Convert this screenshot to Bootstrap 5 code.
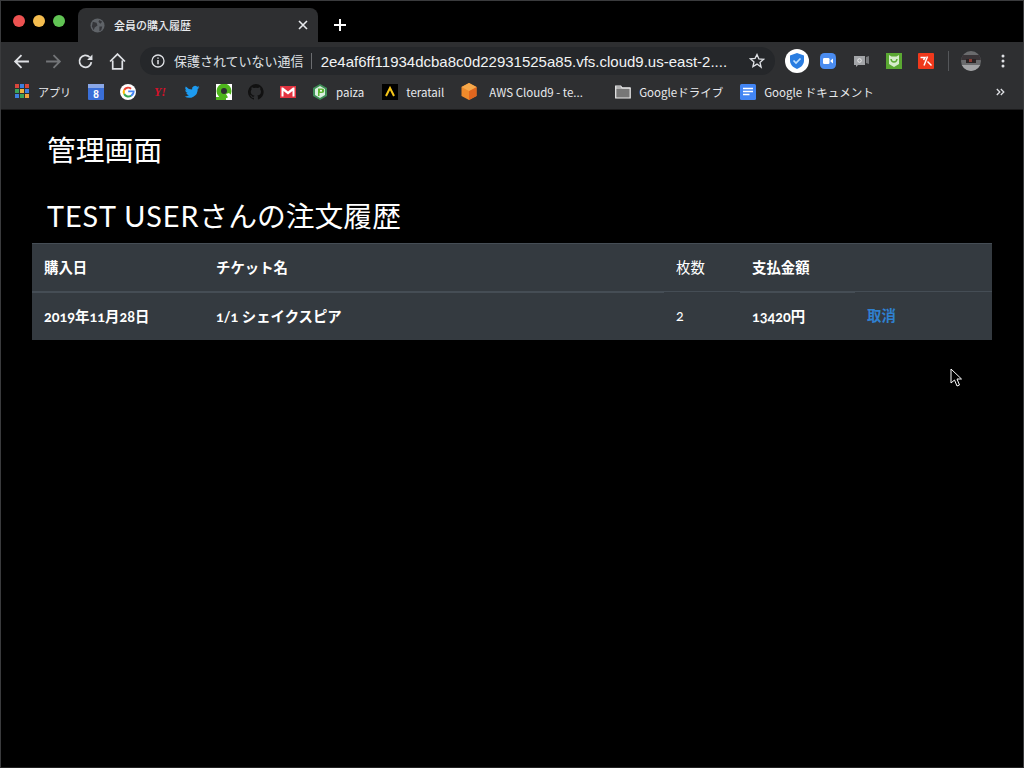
<!DOCTYPE html>
<html lang="ja">
<head>
<meta charset="utf-8">
<title>会員の購入履歴</title>
<link href="https://cdn.jsdelivr.net/npm/bootstrap@5.3.0/dist/css/bootstrap.min.css" rel="stylesheet">
<style>
html,body{height:100%;}
body{background:#000;color:#fff;font-family:"Lato","Noto Sans CJK JP",sans-serif;overflow:hidden;}
.shell{height:768px;border:1px solid #3a3b3d;border-bottom-color:#222;display:flex;flex-direction:column;position:relative;}
.tabstrip{height:41px;flex:none;background:#000;padding-left:12px;}
.light{width:12px;height:12px;border-radius:50%;margin-right:8px;margin-top:-1px;}
.tab-item{width:240px;height:34px;margin-left:5px;align-self:flex-end;background:#2e2f31;border-radius:8px 8px 0 0;padding:0 10px 0 12px;font:500 11px "Noto Sans CJK JP",sans-serif;color:#e8eaed;}
.tab-item span{flex:1;margin-left:9px;}
.plus{margin-left:16px;margin-top:6px;}
.toolbar{height:38px;flex:none;background:#2e2f31;padding-left:12px;}
.tool{margin-right:15px;flex:none;}
.omni{width:635px;height:28px;margin-left:-1px;margin-right:10px;border-radius:14px;background:#25272a;padding:0 10px 0 11px;font:400 13px "Noto Sans CJK JP",sans-serif;color:#dfe1e5;white-space:nowrap;}
.omni .warn{margin-left:9px;padding-right:7px;border-right:1px solid #6b6d70;line-height:16px;}
.omni .addr{margin-left:9px;flex:1;font:400 15px "Liberation Sans",sans-serif;color:#f1f3f4;}
.ext{margin-right:11px;flex:none;}
.bookmarks{height:30px;flex:none;background:#2e2f31;padding-left:14px;padding-bottom:6px;font:400 11.5px "Noto Sans CJK JP","Liberation Sans",sans-serif;color:#e8eaed;white-space:nowrap;border-bottom:1px solid #1b1b1c;}
.bm{flex:none;margin-right:16px;}
.bm-gap{margin-right:8px;}
.apps-label{font-size:11px;margin-right:17px;}
.page-area{flex:1;background:#000;padding:22px 31px 0;}
.ttl{font-family:"Lato","Noto Sans CJK JP",sans-serif;font-size:28.8px;font-weight:400;line-height:36px;margin:0 0 30px 15px;}
.ttl.second{margin-bottom:9px;}
.ttl-latin{letter-spacing:.9px;}
.orders{--bs-table-bg:#343a40;--bs-table-color:#fff;--bs-table-border-color:#454d55;width:960px;table-layout:fixed;margin:0;font-size:14.4px;background:#343a40;}
.orders th,.orders td{padding:1px 12px 0;vertical-align:middle;font-weight:700;border-bottom:0;box-shadow:none;background:#343a40;color:#fff;font-variant-numeric:oldstyle-nums;}
.orders thead th,.orders thead td{height:48px;border-top:1px solid #454d55;border-bottom:2px solid #454d55;}
.orders thead td{border-bottom-width:1px;}
.orders tbody td{height:48px;}
.orders .plain{font-weight:400;}
.orders a{color:#2f80d0;text-decoration:none;}
.cursor{position:absolute;left:949px;top:367px;}
</style>
</head>
<body>
<div class="shell">
  <div class="tabstrip d-flex align-items-center">
    <div class="light" style="background:#ed5251"></div>
    <div class="light" style="background:#f5bd4f"></div>
    <div class="light" style="background:#61c454"></div>
    <div class="tab-item d-flex align-items-center">
      <svg width="15" height="15" viewBox="0 0 16 16"><circle cx="8" cy="8" r="7.500" fill="#5f6368"/><path d="M3 4l4 1 1 3-3 2-1 3-2-4zM10 2l3 2-2 2-2-2zM10 9l3 0-1 4-2 1z" fill="#35363a"/></svg>
      <span>会員の購入履歴</span>
      <svg width="10" height="10" viewBox="0 0 10 10"><path d="M1 1l8 8M9 1l-8 8" stroke="#e8eaed" stroke-width="1.600"/></svg>
    </div>
    <svg class="plus" width="12" height="12" viewBox="0 0 12 12"><path d="M6 0v12M0 6h12" stroke="#fff" stroke-width="2"/></svg>
  </div>
  <div class="toolbar d-flex align-items-center">
    <svg class="tool" width="17" height="17" viewBox="0 0 16 16"><path d="M15 8H2M8 2L2 8l6 6" fill="none" stroke="#dfe1e5" stroke-width="1.700"/></svg>
    <svg class="tool" width="17" height="17" viewBox="0 0 16 16"><path d="M1 8h13M8 2l6 6-6 6" fill="none" stroke="#737578" stroke-width="1.700"/></svg>
    <svg class="tool" width="17" height="17" viewBox="0 0 16 16"><path d="M13.500 8.500A5.600 5.600 0 1 1 12 4" fill="none" stroke="#dfe1e5" stroke-width="1.700"/><path d="M14.500 1.500v5h-5z" fill="#dfe1e5"/></svg>
    <svg class="tool" width="17" height="17" viewBox="0 0 16 16"><path d="M1 8l7-7 7 7M3.500 7v8h9V7" fill="none" stroke="#dfe1e5" stroke-width="1.600"/></svg>
    <div class="omni d-flex align-items-center">
      <svg width="14" height="14" viewBox="0 0 14 14"><circle cx="7" cy="7" r="6" fill="none" stroke="#dfe1e5" stroke-width="1.300"/><path d="M7 6v4.200M7 3.400v1.400" stroke="#dfe1e5" stroke-width="1.500"/></svg>
      <span class="warn">保護されていない通信</span>
      <span class="addr">2e4af6ff11934dcba8c0d22931525a85.vfs.cloud9.us-east-2....</span>
      <svg width="16" height="16" viewBox="0 0 16 16"><path d="M8 1.500l1.900 4.400 4.700.4-3.600 3.100 1.100 4.700L8 11.100l-4.100 2.500L5 8.900 1.400 5.800l4.700-.4z" fill="none" stroke="#dfe1e5" stroke-width="1.300"/></svg>
    </div>
    <svg class="ext" width="24" height="24" viewBox="0 0 24 24"><circle cx="12" cy="12" r="12" fill="#fff"/><path d="M12 4l7 2.500v5c0 4-3 7-7 8.500-4-1.500-7-4.500-7-8.500v-5z" fill="#2a7de1"/><path d="M8.500 11.500l2.500 2.500 4.500-4.500" fill="none" stroke="#bfe0ff" stroke-width="1.700"/></svg>
    <svg class="ext" width="16" height="16" viewBox="0 0 16 16"><rect width="16" height="16" rx="4.500" fill="#4a8cf0"/><rect x="3" y="5" width="6.500" height="6" rx="1.200" fill="#fff"/><path d="M10.500 7.500l2.500-2v5l-2.500-2z" fill="#fff"/></svg>
    <svg class="ext" width="16" height="16" style="margin-left:6px;margin-right:17px" viewBox="0 0 16 16"><path d="M1 3h11v9H5l-2 2v-2H1z" fill="#a3a5a8"/><path d="M13 4l3-1v8l-3-1z" fill="#77797c"/><circle cx="6.500" cy="7.500" r="1.800" fill="none" stroke="#eee" stroke-width=".9"/></svg>
    <svg class="ext" width="16" height="16" style="margin-right:16px" viewBox="0 0 16 16"><rect width="16" height="16" fill="#5aa832"/><path d="M3 2l2.500 1.500h5L13 2v9l-5 3-5-3z" fill="#d6eccb"/><path d="M5 6c.5 4 5.500 4 6 0" fill="none" stroke="#5aa832" stroke-width="1.500"/></svg>
    <svg class="ext" width="16" height="16" style="margin-right:14px" viewBox="0 0 16 16"><rect width="16" height="16" rx="1" fill="#f0391c"/><path d="M2.500 4.500h4.500l-1.500 2.500M9.500 3.500L6 12.500M9.500 8.500l4 4" stroke="#fff" stroke-width="1.500" fill="none"/></svg>
    <div class="ext" style="width:1px;height:20px;background:#55575a;margin-right:12px"></div>
    <svg class="ext" width="20" height="20" style="margin-right:20px" viewBox="0 0 20 20"><defs><clipPath id="cp"><circle cx="10" cy="10" r="10"/></clipPath></defs><g clip-path="url(#cp)"><rect width="20" height="20" fill="#6a6b6d"/><rect y="4" width="20" height="5" fill="#3a3538"/><rect x="5" y="8" width="10" height="4" fill="#2a2324"/><rect x="8" y="8" width="3" height="3" fill="#8a3b33"/><rect y="14" width="20" height="6" fill="#a3a4a6"/></g></svg>
    <svg class="ext" width="4" height="14" viewBox="0 0 4 14"><circle cx="2" cy="2" r="1.500" fill="#dfe1e5"/><circle cx="2" cy="7" r="1.500" fill="#dfe1e5"/><circle cx="2" cy="12" r="1.500" fill="#dfe1e5"/></svg>
  </div>
  <div class="bookmarks d-flex align-items-center">
    <svg class="bm-gap flex-none" width="15" height="15" viewBox="0 0 15 15"><g><rect x="0" y="0" width="4" height="4" fill="#d8473c"/><rect x="5" y="0" width="4" height="4" fill="#3d7fe0"/><rect x="10" y="0" width="4" height="4" fill="#d8473c"/><rect x="0" y="5" width="4" height="4" fill="#3da35a"/><rect x="5" y="5" width="4" height="4" fill="#f2b33d"/><rect x="10" y="5" width="4" height="4" fill="#3d7fe0"/><rect x="0" y="10" width="4" height="4" fill="#3d7fe0"/><rect x="5" y="10" width="4" height="4" fill="#3da35a"/><rect x="10" y="10" width="4" height="4" fill="#f2a33d"/></g></svg>
    <span class="apps-label">アプリ</span>
    <svg class="bm" width="16" height="16" viewBox="0 0 16 16"><rect width="16" height="16" rx="1" fill="#3a6fd8"/><rect width="16" height="4" fill="#8aa7e6"/><text x="8" y="14" font-size="10" fill="#fff" text-anchor="middle" font-family="Liberation Sans" font-weight="700">8</text></svg>
    <svg class="bm" width="16" height="16" viewBox="0 0 16 16"><circle cx="8" cy="8" r="8" fill="#fff"/><path d="M12.800 8.300h-4.600v-1.800h6.400c.3 3.800-2.200 6.500-5.600 6.500" fill="#4285f4"/><path d="M3.400 5.300A5.400 5.400 0 0 1 11.700 4.100L10.400 5.400A3.500 3.500 0 0 0 5 6.700z" fill="#ea4335"/><path d="M3.400 5.300L5 6.700a3.500 3.500 0 0 0 0 2.600L3.400 10.700a5.400 5.400 0 0 1 0-5.400z" fill="#fbbc05"/><path d="M3.400 10.700L5 9.300a3.500 3.500 0 0 0 5.200 1.600L11.600 12.200A5.400 5.400 0 0 1 3.400 10.700z" fill="#34a853"/></svg>
    <svg class="bm" width="16" height="16" viewBox="0 0 16 16"><text x="8" y="12" font-size="12" fill="#d6112a" text-anchor="middle" font-family="Liberation Serif" font-weight="700" font-style="italic">Y!</text></svg>
    <svg class="bm" width="16" height="16" viewBox="0 0 16 16"><path d="M15.500 3.300c-.5.300-1.100.4-1.700.5.600-.4 1.100-1 1.300-1.700-.6.400-1.200.6-1.900.7a3 3 0 0 0-5.100 2.700A8.500 8.500 0 0 1 1.800 2.400 3 3 0 0 0 2.700 6.400c-.5 0-1-.1-1.400-.4 0 1.500 1 2.700 2.400 3-.4.100-.9.100-1.400 0 .4 1.200 1.500 2.100 2.800 2.100A6 6 0 0 1 .6 12.400a8.500 8.500 0 0 0 13.100-7.500c.7-.4 1.300-1 1.800-1.600z" fill="#1d9bf0"/></svg>
    <svg class="bm" width="16" height="16" viewBox="0 0 16 16"><rect width="16" height="16" fill="#fff"/><circle cx="8" cy="7" r="7.500" fill="#4eb51c"/><circle cx="8" cy="7" r="3" fill="#2e2f31"/><path d="M10 10l3 5h3v-3l-3-3z" fill="#fff"/><rect y="13" width="10" height="3" fill="#4eb51c"/></svg>
    <svg class="bm" width="16" height="16" viewBox="0 0 16 16"><path fill="#111" d="M8 0a8 8 0 0 0-2.500 15.600c.4.100.5-.2.500-.4v-1.400c-2.200.5-2.700-1-2.700-1-.4-.9-.9-1.200-.9-1.200-.7-.5.100-.5.100-.5.800.1 1.200.8 1.200.8.700 1.200 1.900.9 2.300.7.100-.5.300-.9.500-1.100-1.800-.2-3.700-.9-3.700-4 0-.9.300-1.600.8-2.100-.1-.2-.4-1 .1-2.100 0 0 .7-.2 2.200.8a7.600 7.600 0 0 1 4 0c1.500-1 2.200-.8 2.200-.8.400 1.100.2 1.900.1 2.100.5.600.8 1.300.8 2.100 0 3.100-1.900 3.700-3.700 3.900.3.300.6.800.6 1.500v2.200c0 .2.100.5.500.4A8 8 0 0 0 8 0z"/></svg>
    <svg class="bm" width="16" height="16" viewBox="0 0 16 16"><rect y="2" width="16" height="12" fill="#e2323f"/><path d="M1.500 3.500v9h2V7l4.500 3.500L12.500 7v5.500h2v-9H13L8 7.500 3 3.500z" fill="#fff"/></svg>
    <svg class="flex-none" style="margin-right:8px" width="16" height="16" viewBox="0 0 16 16"><path d="M8 0l7 4v8l-7 4-7-4V4z" fill="#3f8f57"/><path d="M8 2l5 3v6l-5 3-5-3V5z" fill="#d9efe0"/><path d="M6 4.500h4a2 2 0 0 1 0 4.500H7.500v3H6z" fill="#5cb531"/><circle cx="9" cy="6.700" r="1" fill="#fff"/></svg>
    <span style="margin-right:18px">paiza</span>
    <svg class="flex-none" style="margin-right:8px" width="16" height="16" viewBox="0 0 16 16"><rect width="16" height="16" fill="#000"/><path d="M4 12l4-8 4 8" fill="none" stroke="#f5c518" stroke-width="2"/></svg>
    <span style="margin-right:17px">teratail</span>
    <svg class="flex-none" style="margin-right:12px" width="16" height="17" viewBox="0 0 16 17"><path d="M8 0l7.500 4v9L8 17 .5 13V4z" fill="#ef8a2b"/><path d="M8 8l7.500-4v9L8 17z" fill="#e0661f"/><path d="M8 0l7.500 4L8 8 .5 4z" fill="#f6a84b"/></svg>
    <span style="margin-right:21px;width:105px;overflow:hidden">AWS Cloud9 - te...</span>
    <svg class="flex-none" style="margin-right:8px" width="16" height="14" viewBox="0 0 16 14"><path d="M.7 1h5l1.500 2h8v10H.700z" fill="#777" stroke="#eee" stroke-width="1.200"/><path d="M.7 3h14.600" stroke="#eee"/></svg>
    <span style="margin-right:17px;width:84px">Googleドライブ</span>
    <svg class="flex-none" style="margin-right:8px" width="16" height="16" viewBox="0 0 16 16"><rect width="16" height="16" rx="1.500" fill="#4285f4"/><path d="M3 4.500h10M3 7.500h10M3 10.500h6.500" stroke="#fff" stroke-width="1.500"/></svg>
    <span>Google ドキュメント</span>
    <svg class="ms-auto flex-none" style="margin-right:18px" width="9" height="8" viewBox="0 0 9 8"><path d="M.8 1l3 3-3 3M4.800 1l3 3-3 3" fill="none" stroke="#dfe1e5" stroke-width="1.300"/></svg>
  </div>
  <main class="page-area">
    <h1 class="ttl">管理画面</h1>
    <h2 class="ttl second"><span class="ttl-latin">TEST USER</span>さんの注文履歴</h2>
    <table class="table orders">
      <colgroup><col style="width:172px"><col style="width:460px"><col style="width:76px"><col style="width:115px"><col style="width:137px"></colgroup>
      <thead>
        <tr><th>購入日</th><th>チケット名</th><td class="plain">枚数</td><th>支払金額</th><td></td></tr>
      </thead>
      <tbody>
        <tr><td>2019年11月28日</td><td>1/1 シェイクスピア</td><td class="plain">2</td><td>13420円</td><td><a href="#">取消</a></td></tr>
      </tbody>
    </table>
  </main>
  <svg class="cursor" width="13" height="19" viewBox="0 0 13 19"><path d="M1 1v14l3.500-3 2.500 6 2.500-1-2.500-6h4.500z" fill="#000" stroke="#fff" stroke-width="1"/></svg>
</div>
<script src="https://cdn.jsdelivr.net/npm/bootstrap@5.3.0/dist/js/bootstrap.bundle.min.js"></script>
</body>
</html>
